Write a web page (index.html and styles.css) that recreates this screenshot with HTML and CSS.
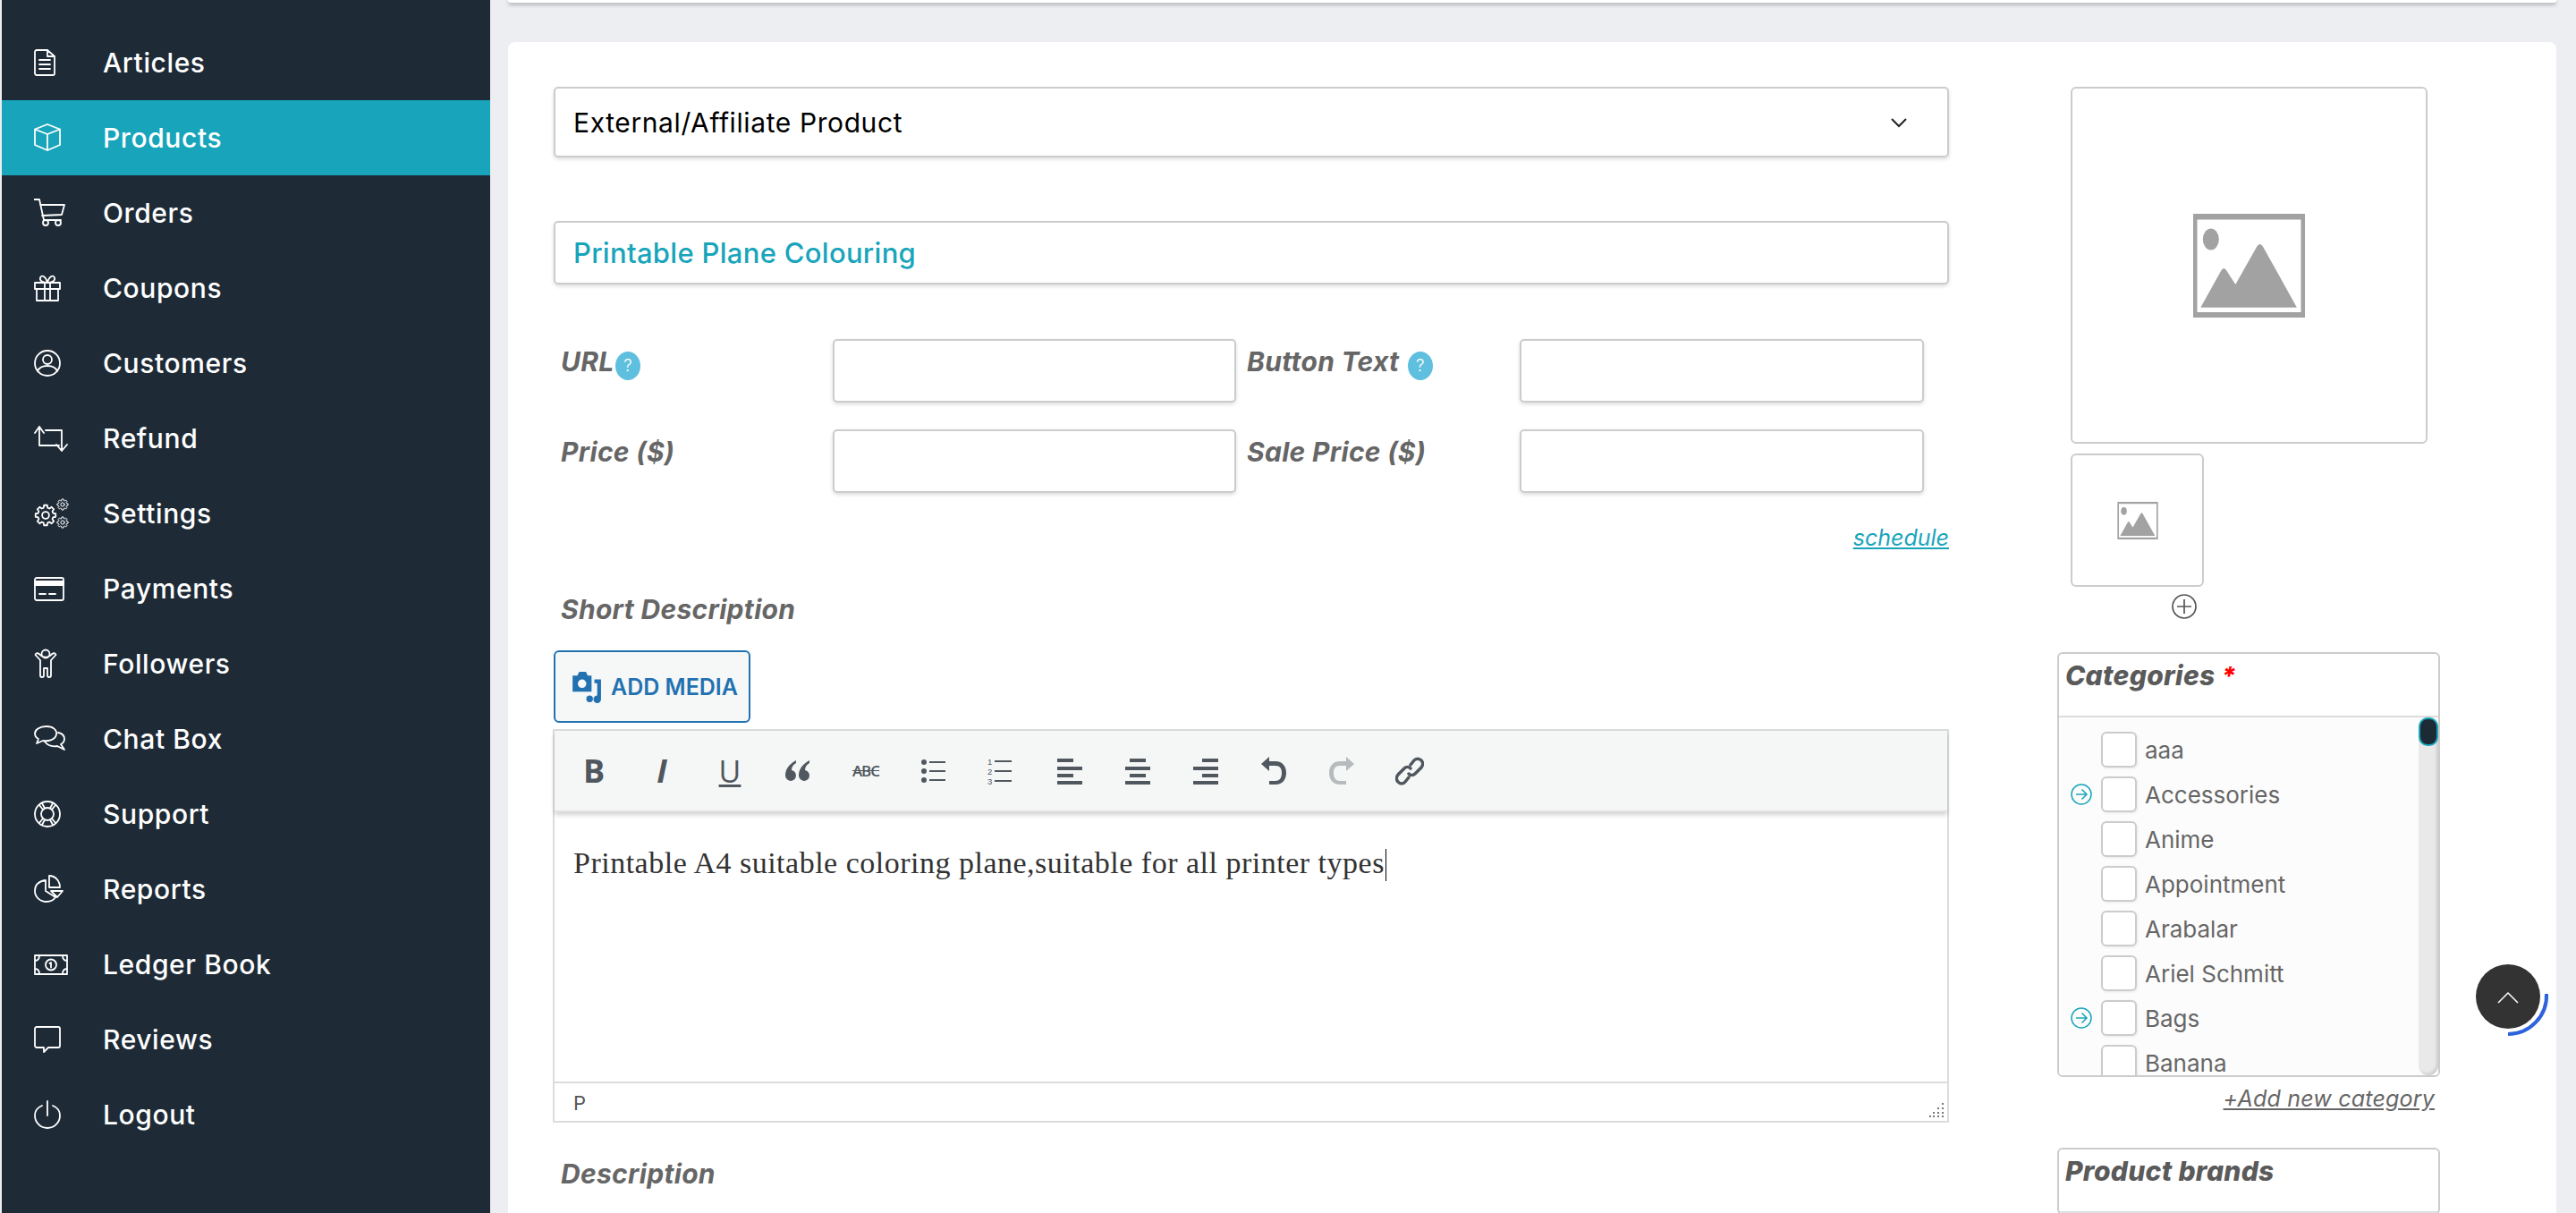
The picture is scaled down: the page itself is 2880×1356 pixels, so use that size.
FILE: index.html
```html
<!DOCTYPE html>
<html>
<head>
    <title>Edit Product</title>
    <meta charset="UTF-8">
    <link rel="stylesheet" href="styles.css">
</head>
<body>

<svg class="defs" width="0" height="0">
    <symbol id="gear" viewBox="-12 -12 24 24" overflow="visible">
        <path vector-effect="non-scaling-stroke" d="M-2.07-7.73L-1.64-10.37L1.64-10.37L2.07-7.73L4-6.93L6.17-8.49L8.49-6.17L6.93-4L7.73-2.07L10.37-1.64L10.37 1.64L7.73 2.07L6.93 4L8.49 6.17L6.17 8.49L4 6.93L2.07 7.73L1.64 10.37L-1.64 10.37L-2.07 7.73L-4 6.93L-6.17 8.49L-8.49 6.17L-6.93 4L-7.73 2.07L-10.37 1.64L-10.37-1.64L-7.73-2.07L-6.93-4L-8.49-6.17L-6.17-8.49L-4-6.93Z"/>
        <circle vector-effect="non-scaling-stroke" r="3.6"/>
    </symbol>
    <symbol id="placeholder" viewBox="0 0 125 116">
        <path fill="#a2a2a2" fill-rule="evenodd" d="M0 0H125V116H0ZM4.5 6.500V110H120.500V6.500Z"/>
        <ellipse fill="#a2a2a2" cx="19.800" cy="28.600" rx="9" ry="12"/>
        <path fill="#a2a2a2" d="M8.300 104.800L31 64Q34.300 58 37.600 64L47.300 79L71 37Q74.600 31 78.200 37L115.900 104.800Z"/>
    </symbol>
    <symbol id="go" viewBox="0 0 24 24">
        <circle cx="12" cy="12" r="11"/>
        <path d="M6 12H18M12.500 6.500L18 12L12.500 17.500"/>
    </symbol>
</svg>

<div class="app">
    <nav class="sidebar">
        <a class="nav-item">
            <svg class="nav-icon" viewBox="0 0 40 36"><path d="M3 4H15L23 11V30A2 2 0 0 1 21 32H3A2 2 0 0 1 1 30V6A2 2 0 0 1 3 4ZM15 4V11H23M6 15H18M6 20H18M6 25H18"/></svg>
            Articles
        </a>
        <a class="nav-item active">
            <svg class="nav-icon" viewBox="0 0 40 36"><path d="M15 3L29 8.500V26L15 32L1 26V8.500ZM1 8.500L15 14L29 8.500M15 14V32"/></svg>
            Products
        </a>
        <a class="nav-item">
            <svg class="nav-icon" viewBox="0 0 40 36"><path d="M0 3H6L11 26H30M7 9H34L31 20L9 21"/><circle cx="13" cy="29" r="3"/><circle cx="27" cy="29" r="3"/></svg>
            Orders
        </a>
        <a class="nav-item">
            <svg class="nav-icon" viewBox="0 0 40 36"><path d="M1 12H29V19H1ZM3 19V32H27V19M12 12V32M18 12V32M15 12C10 12 6 10 7 6.500C8 3 13 4 15 12C17 4 22 3 23 6.500C24 10 20 12 15 12"/></svg>
            Coupons
        </a>
        <a class="nav-item">
            <svg class="nav-icon" viewBox="0 0 40 36"><circle cx="15" cy="18" r="14"/><circle cx="15" cy="14" r="5"/><path d="M4 27C6 22 10 21 15 21C20 21 24 22 26 27"/></svg>
            Customers
        </a>
        <a class="nav-item">
            <svg class="nav-icon" viewBox="0 0 40 36"><path d="M1 12L6 5L11 12M6 5V26H28M13 9H31V31M25 25L31 32L37 25"/></svg>
            Refund
        </a>
        <a class="nav-item">
            <svg class="nav-icon" viewBox="0 0 40 36">
                <use href="#gear" x="0" y="7" width="26" height="26"/>
                <use class="gear-small" href="#gear" x="25" y="1" width="14" height="14"/>
                <use class="gear-small" href="#gear" x="25" y="21" width="14" height="14"/>
            </svg>
            Settings
        </a>
        <a class="nav-item">
            <svg class="nav-icon" viewBox="0 0 40 36"><path class="solid" d="M1 10H33V14H1Z"/><path d="M3 6H31A2 2 0 0 1 33 8V29A2 2 0 0 1 31 31H3A2 2 0 0 1 1 29V8A2 2 0 0 1 3 6ZM6 24H13M17 24H24"/></svg>
            Payments
        </a>
        <a class="nav-item">
            <svg class="nav-icon" viewBox="0 0 40 36"><circle cx="13" cy="7" r="4.500"/><path d="M1.500 8L7 14V31A2 2 0 0 0 11 31V23H15V31A2 2 0 0 0 19 31V14L24.500 8C23 5 21 6 18 9C15 11 11 11 8 9C5 6 3 5 1.500 8Z"/></svg>
            Followers
        </a>
        <a class="nav-item">
            <svg class="nav-icon" viewBox="0 0 40 36"><path d="M14 4C6 4 1 8 1 12C1 15 3 17 5 18L3 23L10 20C16 21 24 19 25 13C26 8 21 4 14 4Z"/><path d="M27 11C32 12 34 15 34 18C34 21 32 23 30 24L34 30L26 26C20 27 15 25 12 21"/></svg>
            Chat Box
        </a>
        <a class="nav-item">
            <svg class="nav-icon" viewBox="0 0 40 36"><circle cx="15" cy="18" r="14"/><circle cx="15" cy="18" r="7"/><path d="M6 8L10 13M24 8L20 13M6 28L10 23M24 28L20 23M9 6L12 11.500M21 6L18 11.500M9 30L12 24.500M21 30L18 24.500"/></svg>
            Support
        </a>
        <a class="nav-item">
            <svg class="nav-icon" viewBox="0 0 40 36"><path d="M13 8C6 9 1 13 1 20C1 27 7 32 14 32C18 32 22 30 24 27L13 20ZM17 3V16H29C29 9 24 3 17 3ZM19 20H32L26 27Z"/></svg>
            Reports
        </a>
        <a class="nav-item">
            <svg class="nav-icon" viewBox="0 0 40 36"><path d="M1 8H37V29H1ZM1 14C4 14 6 12 6 8M37 14C34 14 32 12 32 8M1 23C4 23 6 25 6 29M37 23C34 23 32 25 32 29"/><circle cx="19" cy="18.500" r="6"/><path d="M17.500 17L19 16V21.500"/></svg>
            Ledger Book
        </a>
        <a class="nav-item">
            <svg class="nav-icon" viewBox="0 0 40 36"><path d="M3 4H27A2 2 0 0 1 29 6V25A2 2 0 0 1 27 27H16L11 32V27H3A2 2 0 0 1 1 25V6A2 2 0 0 1 3 4Z"/></svg>
            Reviews
        </a>
        <a class="nav-item">
            <svg class="nav-icon" viewBox="0 0 40 36"><path d="M9 8C4 10 1 14 1 19A14 14 0 0 0 29 19C29 14 26 10 21 8M15 3V19"/></svg>
            Logout
        </a>
    </nav>

    <main class="content">
        <div class="top-card"></div>

        <div class="card">
            <div class="form-col">
                <div class="field select-field">
                    External/Affiliate Product
                    <svg class="chevron" viewBox="0 0 20 12"><path d="M2 2L10 10L18 2"/></svg>
                </div>
                <div class="field title-field">Printable Plane Colouring</div>

                <div class="price-grid">
                    <label class="field-label">URL <span class="help">?</span></label>
                    <div class="field"></div>
                    <label class="field-label second">Button Text <span class="help">?</span></label>
                    <div class="field"></div>
                    <label class="field-label">Price ($)</label>
                    <div class="field"></div>
                    <label class="field-label second">Sale Price ($)</label>
                    <div class="field"></div>
                </div>

                <a class="schedule">schedule</a>

                <div class="field-label section-label">Short Description</div>

                <div class="add-media">
                    <svg class="media-icon" viewBox="0 0 34 34">
                        <path d="M3 5H8L10 1H17L19 5H23V22H3ZM13 9A4.500 4.500 0 1 0 13 18A4.500 4.500 0 1 0 13 9Z" fill-rule="evenodd"/>
                        <path d="M26 9H33V30A4 4 0 1 1 29 26V13H26ZM21 33A3.500 3.500 0 1 1 21 26A3.500 3.500 0 1 1 21 33Z"/>
                    </svg>
                    ADD MEDIA
                </div>

                <div class="editor">
                    <div class="toolbar">
                        <span class="tool tool-b">B</span>
                        <span class="tool tool-i">I</span>
                        <span class="tool tool-u">U</span>
                        <svg class="tool" viewBox="0 0 32 32"><path d="M14 4C7 8 2 13 2 21A6 6 0 1 0 9 15C9 11 11 9 14 7ZM29 4C22 8 17 13 17 21A6 6 0 1 0 24 15C24 11 26 9 29 7Z"/></svg>
                        <span class="tool tool-abc">ABC</span>
                        <svg class="tool" viewBox="0 0 32 32"><circle cx="5" cy="6" r="3"/><circle cx="5" cy="16" r="3"/><circle cx="5" cy="26" r="3"/><path d="M11 5H29V7H11ZM11 15H29V17H11ZM11 25H29V27H11Z"/></svg>
                        <span class="tool tool-ol"><span>1</span><span>2</span><span>3</span></span>
                        <svg class="tool" viewBox="0 0 32 32"><path d="M2 2H20V6H2ZM2 11H30V15H2ZM2 19H20V23H2ZM2 27H30V31H2Z"/></svg>
                        <svg class="tool" viewBox="0 0 32 32"><path d="M7 2H25V6H7ZM2 11H30V15H2ZM7 19H25V23H7ZM2 27H30V31H2Z"/></svg>
                        <svg class="tool" viewBox="0 0 32 32"><path d="M12 2H30V6H12ZM2 11H30V15H2ZM12 19H30V23H12ZM2 27H30V31H2Z"/></svg>
                        <svg class="tool" viewBox="0 0 32 32"><path d="M2 8L11 0V5H18C26 5 30 11 30 18C30 25 26 31 18 31H11V27H18C23 27 25 23 25 18C25 13 23 10 18 10H11V16Z"/></svg>
                        <svg class="tool tool-off" viewBox="0 0 32 32"><path d="M30 8L21 0V5H14C6 5 2 11 2 18C2 25 6 31 14 31H21V27H14C9 27 7 23 7 18C7 13 9 10 14 10H21V16Z"/></svg>
                        <svg class="tool tool-link" viewBox="0 0 32 32"><path d="M17 9L21 4C23 1.500 27 1.500 29 4C31 6 31 9.500 29 12L22 19C20 21 17 21 15 19M15 23L11 28C9 30.500 5 30.500 3 28C1 26 1 22.500 3 20L10 13C12 11 15 11 17 13"/></svg>
                    </div>
                    <div class="editor-body">Printable A4 suitable coloring plane,suitable for all printer types<span class="caret"></span></div>
                    <div class="statusbar">
                        P
                        <svg class="grip" viewBox="0 0 18 18"><path d="M14 1H16V3H14ZM14 6H16V8H14ZM9 6H11V8H9ZM14 11H16V13H14ZM9 11H11V13H9ZM4 11H6V13H4ZM14 15H16V17H14ZM9 15H11V17H9ZM4 15H6V17H4ZM0 15H2V17H0Z"/></svg>
                    </div>
                </div>

                <div class="field-label section-label description">Description</div>
            </div>

            <div class="side-col">
                <div class="image-box"><svg class="ph-large"><use href="#placeholder"/></svg></div>
                <div class="image-box small"><svg class="ph-small"><use href="#placeholder"/></svg></div>
                <div class="add-row">
                    <svg class="add-icon" viewBox="0 0 28 28"><circle cx="14" cy="14" r="13"/><path d="M14 6V22M6 14H22"/></svg>
                </div>

                <div class="panel categories">
                    <div class="panel-head">Categories <span class="required">*</span></div>
                    <div class="cat-body">
                        <ul class="cat-list">
                            <li><span class="cat-go"></span><span class="check"></span>aaa</li>
                            <li><svg class="cat-go"><use href="#go"/></svg><span class="check"></span>Accessories</li>
                            <li><span class="cat-go"></span><span class="check"></span>Anime</li>
                            <li><span class="cat-go"></span><span class="check"></span>Appointment</li>
                            <li><span class="cat-go"></span><span class="check"></span>Arabalar</li>
                            <li><span class="cat-go"></span><span class="check"></span>Ariel Schmitt</li>
                            <li><svg class="cat-go"><use href="#go"/></svg><span class="check"></span>Bags</li>
                            <li><span class="cat-go"></span><span class="check"></span>Banana</li>
                        </ul>
                        <div class="scroll-track"><div class="scroll-thumb"></div></div>
                    </div>
                </div>
                <a class="add-category">+Add new category</a>

                <div class="panel brands">
                    <div class="panel-head">Product brands</div>
                </div>
            </div>
        </div>
    </main>
</div>

<div class="to-top">
    <svg class="to-top-arc" viewBox="0 0 90 90"><path d="M86 40A43 43 0 0 1 43 85"/></svg>
    <svg class="to-top-chevron" viewBox="0 0 24 14"><path d="M1 13L12 2L23 13"/></svg>
</div>

</body>
</html>
```

FILE: styles.css
```css
html {
    box-sizing: border-box;
}
*, *:before, *:after {
    box-sizing: inherit;
}

body{
    margin: 0;
    height: 100vh;
    overflow: hidden;
    background-color: #eceef2;
    font-family: Inter, "Noto Sans", sans-serif;
    color: #666666;
}

.defs{
    position: absolute;
}

.app{
    display: flex;
    height: 100%;
    padding-left: 2px;
}

/* sidebar */

.sidebar{
    flex: 0 0 546px;
    background-color: #1e2b37;
    padding-top: 28px;
}

.nav-item{
    display: flex;
    align-items: center;
    height: 84px;
    padding-left: 36px;
    gap: 37px;
    color: #ffffff;
    font-size: 30px;
    font-weight: 500;
    letter-spacing: 0.6px;
    line-height: 34px;
}

.nav-item.active{
    background-color: #18a5bb;
}

.nav-icon{
    flex: none;
    width: 40px;
    height: 36px;
    fill: none;
    stroke: #ffffff;
    stroke-width: 1.8;
    stroke-linejoin: round;
    stroke-linecap: round;
}

.nav-icon .solid{
    fill: #ffffff;
}

.nav-icon .gear-small{
    stroke-width: 1;
}

/* main */

.content{
    flex: 1;
    padding: 0 22px 0 20px;
    min-width: 0;
}

.top-card{
    height: 3px;
    background-color: #ffffff;
    box-shadow: 0 2px 4px rgba(0, 0, 0, 0.35);
    border-radius: 0 0 4px 4px;
    margin-bottom: 44px;
}

.card{
    display: flex;
    height: 1400px;
    background-color: #ffffff;
    border-radius: 8px 8px 0 0;
    padding: 50px 0 0 51px;
}

.form-col{
    flex: 0 0 1560px;
}

.field{
    border: 2px solid #cccccc;
    border-radius: 5px;
    height: 71px;
    background-color: #ffffff;
    box-shadow: 0 2px 4px rgba(0, 0, 0, 0.14);
}

.select-field{
    display: flex;
    align-items: center;
    justify-content: space-between;
    height: 79px;
    padding: 0 44px 0 20px;
    margin-bottom: 71px;
    color: #000000;
    font-size: 30px;
    font-weight: 400;
    letter-spacing: 0.6px;
}

.chevron{
    width: 20px;
    height: 12px;
    fill: none;
    stroke: #222222;
    stroke-width: 2;
}

.title-field{
    display: flex;
    align-items: center;
    padding: 0 20px;
    margin-bottom: 61px;
    color: #18a5bb;
    font-size: 31px;
    font-weight: 500;
    letter-spacing: 0.3px;
}

.price-grid{
    display: grid;
    grid-template-columns: 312px 451px 317px 452px;
    grid-template-rows: 71px 71px;
    row-gap: 30px;
}

.field-label{
    display: block;
    padding: 3px 0 0 8px;
    color: #666666;
    font-size: 30px;
    font-weight: 700;
    font-style: italic;
    letter-spacing: 0.3px;
    line-height: 44px;
}

.field-label.second{
    padding-left: 12px;
}

.help{
    display: inline-block;
    width: 28px;
    height: 32px;
    margin-left: -6px;
    border-radius: 50%;
    background-color: #5fbfde;
    color: #ffffff;
    font-size: 19px;
    font-weight: 300;
    font-style: normal;
    letter-spacing: 0;
    line-height: 32px;
    text-align: center;
    vertical-align: 0;
}

.second .help{
    margin-left: 2px;
}

.schedule{
    display: block;
    text-align: right;
    margin-top: 35px;
    color: #18a5bb;
    font-size: 25px;
    font-style: italic;
    text-decoration: underline;
    line-height: 30px;
}

.section-label{
    margin-top: 43px;
    padding-top: 0;
    line-height: 44px;
}

.add-media{
    display: flex;
    align-items: center;
    gap: 10px;
    width: 220px;
    height: 81px;
    margin-top: 24px;
    padding-left: 16px;
    border: 2px solid #2271b1;
    border-radius: 6px;
    background-color: #f6f7f7;
    color: #2271b1;
    font-size: 25px;
    font-weight: 600;
}

.media-icon{
    width: 36px;
    height: 36px;
    fill: #2271b1;
}

.editor{
    margin: 7px 0 0 -1px;
    width: 1561px;
    border: 2px solid #dcdcdc;
}

.toolbar{
    display: flex;
    align-items: center;
    gap: 44px;
    height: 91px;
    padding-left: 28px;
    background-color: #f5f7f6;
    box-shadow: 0 3px 5px rgba(0, 0, 0, 0.18);
    border-bottom: 2px solid #e2e2e2;
    color: #50575e;
}

.tool{
    flex: none;
    width: 32px;
    height: 32px;
    fill: #50575e;
    font-family: "Open Sans", sans-serif;
    text-align: center;
    line-height: 32px;
}

.tool-b{
    font-size: 36px;
    font-weight: 700;
}

.tool-i{
    font-size: 36px;
    font-weight: 700;
    font-style: italic;
}

.tool-u{
    font-size: 34px;
    text-decoration: underline;
    text-underline-offset: 2px;
    text-decoration-thickness: 3px;
}

.tool-abc{
    font-size: 17px;
    font-weight: 600;
    letter-spacing: -1px;
    text-decoration: line-through;
}

.tool-ol{
    display: flex;
    flex-direction: column;
    font-family: "Liberation Sans", sans-serif;
    font-size: 9.5px;
    line-height: 11px;
    text-align: left;
}

.tool-ol span{
    display: flex;
    align-items: center;
    gap: 3px;
}

.tool-ol span:after{
    content: "";
    width: 19px;
    height: 2px;
    background-color: #50575e;
}

.tool-off{
    fill: #b8bbbd;
}

.tool-link{
    fill: none;
    stroke: #50575e;
    stroke-width: 3.5;
    stroke-linecap: round;
}

.editor-body{
    height: 301px;
    padding: 37px 0 0 21px;
    color: #333333;
    font-family: "Liberation Serif", serif;
    font-size: 34px;
    letter-spacing: 0.5px;
    line-height: 40px;
}

.caret{
    display: inline-block;
    width: 1px;
    height: 36px;
    margin-left: 1px;
    background-color: #000000;
    vertical-align: -9px;
}

.statusbar{
    position: relative;
    height: 44px;
    padding: 9px 0 0 21px;
    border-top: 2px solid #dcdcdc;
    color: #555555;
    font-size: 22px;
    line-height: 26px;
}

.grip{
    position: absolute;
    right: 2px;
    bottom: 3px;
    width: 18px;
    height: 18px;
    fill: #777777;
}

.description{
    margin-top: 35px;
}

/* right column */

.side-col{
    flex: 0 0 428px;
    margin-left: 121px;
}

.image-box{
    display: flex;
    align-items: center;
    justify-content: center;
    width: 399px;
    height: 399px;
    margin: 0 0 11px 15px;
    border: 2px solid #cccccc;
    border-radius: 6px;
}

.image-box.small{
    width: 149px;
    height: 149px;
    margin-bottom: 8px;
}

.ph-large{
    width: 125px;
    height: 116px;
}

.ph-small{
    width: 46px;
    height: 42px;
}

.add-row{
    display: flex;
    justify-content: flex-start;
    padding-left: 128px;
    height: 28px;
    margin-bottom: 37px;
}

.add-icon{
    width: 28px;
    height: 28px;
    fill: none;
    stroke: #555555;
    stroke-width: 1.7;
}

.panel{
    border: 2px solid #cccccc;
    border-radius: 6px;
    overflow: hidden;
}

.panel-head{
    height: 71px;
    padding: 2px 0 0 7px;
    border-bottom: 2px solid #dddddd;
    color: #5a5a5a;
    font-size: 30px;
    font-weight: 800;
    font-style: italic;
    letter-spacing: 0.3px;
    line-height: 44px;
}

.required{
    color: #ff0000;
    font-size: 28px;
}

.cat-body{
    display: flex;
    height: 400px;
    background-color: #fcfcfc;
}

.cat-list{
    flex: 1;
    margin: 0;
    padding: 11px 0 0 13px;
    list-style: none;
}

.cat-list li{
    display: flex;
    align-items: center;
    height: 50px;
    color: #666666;
    font-size: 26px;
}

.cat-go{
    flex: none;
    width: 24px;
    height: 24px;
    margin-right: 10px;
    fill: none;
    stroke: #18a5bb;
    stroke-width: 1.5;
}

.check{
    flex: none;
    width: 40px;
    height: 40px;
    margin-right: 9px;
    border: 2px solid #cccccc;
    border-radius: 6px;
    background-color: #ffffff;
    box-shadow: 1px 1px 3px rgba(0, 0, 0, 0.08);
}

.scroll-track{
    flex: 0 0 22px;
    background-color: #e9e9e9;
    border-radius: 11px;
    box-shadow: inset -2px -2px 3px rgba(0, 0, 0, 0.12);
}

.scroll-thumb{
    height: 32px;
    border: 2px solid #18a5bb;
    border-radius: 10px;
    background-color: #1c2a36;
}

.add-category{
    display: block;
    margin-top: 9px;
    padding-right: 6px;
    color: #666666;
    font-size: 25px;
    font-style: italic;
    letter-spacing: 0.2px;
    text-align: right;
    text-decoration: underline;
    line-height: 30px;
}

.brands{
    margin-top: 40px;
}

/* scroll to top button */

.to-top{
    position: fixed;
    left: 2768px;
    top: 1078px;
    width: 72px;
    height: 72px;
    border-radius: 50%;
    background-color: #333333;
}

.to-top-arc{
    position: absolute;
    left: -7px;
    top: -7px;
    width: 90px;
    height: 90px;
    fill: none;
    stroke: #2d63dc;
    stroke-width: 4;
}

.to-top-chevron{
    position: absolute;
    left: 24px;
    top: 30px;
    width: 24px;
    height: 14px;
    fill: none;
    stroke: #ffffff;
    stroke-width: 1.5;
}
```
